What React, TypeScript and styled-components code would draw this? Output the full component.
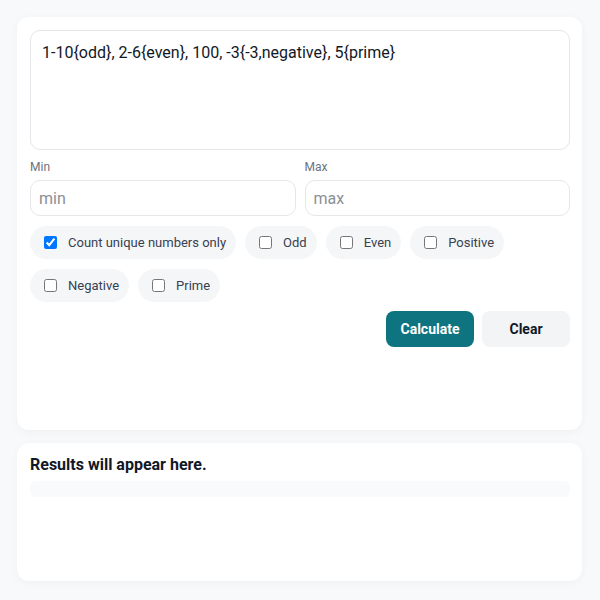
import { useState } from 'react';
import styled, { createGlobalStyle } from 'styled-components';

const GlobalStyle = createGlobalStyle`
  * {
    box-sizing: border-box;
  }

  body {
    margin: 0;
    background: #f8f9fa;
    font-family: Roboto, 'Noto Sans', Arial, sans-serif;
    color: #111827;
  }
`;

const filters = ['Odd', 'Even', 'Positive', 'Negative', 'Prime'];

const App = () => {
  const [input, setInput] = useState('1-10{odd}, 2-6{even}, 100, -3{-3,negative}, 5{prime}');
  const [unique, setUnique] = useState(true);
  const [checked, setChecked] = useState<Record<string, boolean>>({});

  return (
    <>
      <GlobalStyle />
      <Page>
        <Card>
          <Editor value={input} onChange={(e) => setInput(e.target.value)} />
          <Range>
            <Field>
              <Label>Min</Label>
              <Input placeholder="min" />
            </Field>
            <Field>
              <Label>Max</Label>
              <Input placeholder="max" />
            </Field>
          </Range>
          <Chips>
            <Chip>
              <input type="checkbox" checked={unique} onChange={() => setUnique(!unique)} />
              Count unique numbers only
            </Chip>
            {filters.map((f) => (
              <Chip key={f}>
                <input
                  type="checkbox"
                  checked={!!checked[f]}
                  onChange={() => setChecked({ ...checked, [f]: !checked[f] })}
                />
                {f}
              </Chip>
            ))}
          </Chips>
          <Actions>
            <Button primary>Calculate</Button>
            <Button onClick={() => setInput('')}>Clear</Button>
          </Actions>
        </Card>
        <ResultCard>
          <ResultTitle>Results will appear here.</ResultTitle>
          <ResultBar />
        </ResultCard>
      </Page>
    </>
  );
};

export default App;

const Page = styled.div`
  display: flex;
  flex-direction: column;
  gap: 13px;
  padding: 17px 18px 17px 17px;
`;

const Card = styled.div`
  background: white;
  border-radius: 12px;
  box-shadow: 0 2px 10px rgba(0, 0, 0, 0.04);
  padding: 13px 12px 13px 13px;
  min-height: 413px;
  display: flex;
  flex-direction: column;
`;

const Editor = styled.textarea`
  width: 100%;
  height: 120px;
  resize: none;
  border: 1px solid #e5e7eb;
  border-radius: 10px;
  padding: 12px 11px;
  font-family: Roboto, Arial, sans-serif;
  font-size: 16px;
  line-height: 20px;
  color: #111827;
  outline: none;
`;

const Range = styled.div`
  display: grid;
  grid-template-columns: 1fr 1fr;
  gap: 9px;
  margin-top: 10px;
`;

const Field = styled.label`
  display: flex;
  flex-direction: column;
  gap: 5px;
`;

const Label = styled.span`
  font-size: 12px;
  line-height: 15px;
  color: #6b7280;
`;

const Input = styled.input`
  height: 36px;
  border: 1px solid #e5e7eb;
  border-radius: 10px;
  padding: 0 8px;
  font-family: Roboto, Arial, sans-serif;
  font-size: 16px;
  color: #111827;
  outline: none;

  &::placeholder {
    color: #8b8f96;
  }
`;

const Chips = styled.div`
  display: flex;
  flex-wrap: wrap;
  gap: 10px 9px;
  margin-top: 10px;
`;

const Chip = styled.label`
  display: flex;
  align-items: center;
  gap: 11px;
  height: 33px;
  padding: 0 10px 0 14px;
  border-radius: 999px;
  background: #f5f6f8;
  font-size: 13px;
  color: #374151;
  cursor: pointer;

  & > input {
    margin: 0;
    width: 13px;
    height: 13px;
  }
`;

const Actions = styled.div`
  display: flex;
  justify-content: flex-end;
  gap: 8px;
  margin-top: 9px;
`;

const Button = styled.button<{ primary?: boolean }>`
  width: 88px;
  height: 36px;
  border: none;
  border-radius: 8px;
  background: ${(p) => (p.primary ? '#0e7480' : '#f3f4f6')};
  color: ${(p) => (p.primary ? 'white' : '#111827')};
  font-family: Roboto, Arial, sans-serif;
  font-size: 14px;
  font-weight: 700;
  cursor: pointer;
`;

const ResultCard = styled.div`
  background: white;
  border-radius: 12px;
  box-shadow: 0 2px 10px rgba(0, 0, 0, 0.04);
  padding: 13px 12px 13px 13px;
  height: 138px;
`;

const ResultTitle = styled.h2`
  margin: 0;
  font-size: 16px;
  line-height: 18px;
  font-weight: 700;
  color: #111827;
`;

const ResultBar = styled.div`
  margin-top: 7px;
  height: 16px;
  border-radius: 6px;
  background: #f8fafc;
`;
